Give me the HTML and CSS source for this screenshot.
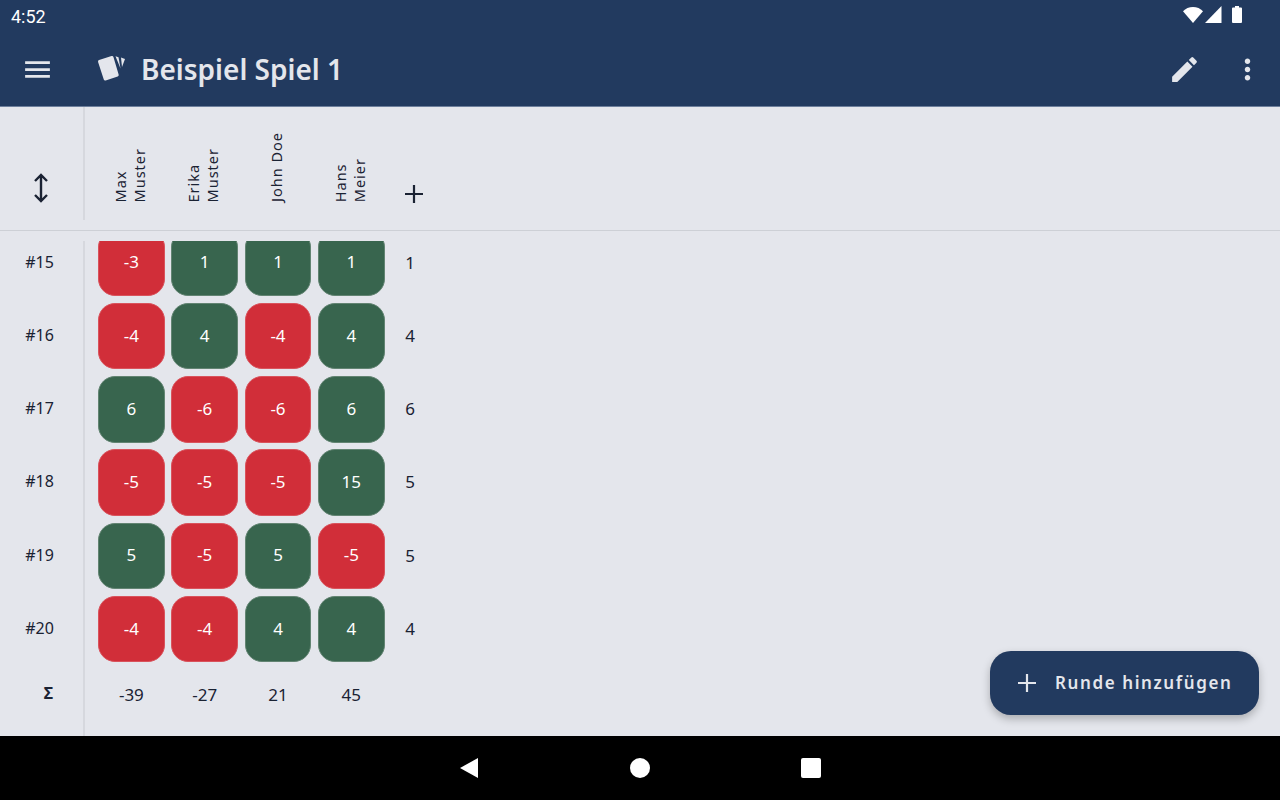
FILE: index.html
```html
<!DOCTYPE html>
<html lang="de">
<head>
    <meta charset="UTF-8">
    <meta name="viewport" content="width=device-width, initial-scale=1.0">
    <title>Beispiel Spiel 1</title>
    <link rel="stylesheet" href="styles.css">
</head>
<body>
    <div class="app">
        <div class="top">
            <div class="status">
                <span class="time">4:52</span>
                <div class="status-icons">
                    <svg class="wifi" width="20" height="16" viewBox="0 0 20 16"><path d="M10 16 0 4.2C2.6 1.6 6.1 0 10 0s7.400 1.600 10 4.200z" fill="#fff"/></svg>
                    <svg class="signal" width="17" height="17" viewBox="0 0 17 17"><path d="M16.500 0v17H0z" fill="#fff"/></svg>
                    <svg class="battery" width="10" height="17" viewBox="0 0 10 17"><path d="M3 0h4v1.500h2a1 1 0 0 1 1 1V16a1 1 0 0 1-1 1H1a1 1 0 0 1-1-1V2.500a1 1 0 0 1 1-1h2z" fill="#fff"/></svg>
                </div>
            </div>
            <div class="appbar">
                <svg class="menu-icon" width="33" height="33" viewBox="0 0 24 24"><path d="M3 18h18v-2H3v2zm0-5h18v-2H3v2zm0-7v2h18V6H3z" fill="#e4e6ec"/></svg>
                <svg class="logo" width="30" height="30" viewBox="0 0 30 30">
                    <path d="M3.500 8.500 16 4.500l5.200 17.500-12 4z" fill="#e4e6ec" stroke="#e4e6ec" stroke-width="3" stroke-linejoin="round"/>
                    <path d="M19.500 3.200 22.500 4.200 24.500 15.500z" fill="#e4e6ec"/>
                    <path d="M25 4.500 29 6 26 14z" fill="#e4e6ec"/>
                </svg>
                <h1 class="title">Beispiel Spiel 1</h1>
                <svg class="edit-icon" width="33" height="33" viewBox="0 0 24 24"><path d="M3 17.250V21h3.750L17.810 9.940l-3.750-3.750L3 17.250zM20.710 7.040a1 1 0 0 0 0-1.410l-2.340-2.340a1 1 0 0 0-1.410 0l-1.830 1.830 3.750 3.750 1.830-1.830z" fill="#e4e6ec"/></svg>
                <svg class="more-icon" width="33" height="33" viewBox="0 0 24 24"><path d="M12 8c1.100 0 2-.9 2-2s-.9-2-2-2-2 .9-2 2 .9 2 2 2zm0 2c-1.100 0-2 .9-2 2s.9 2 2 2 2-.9 2-2-.9-2-2-2zm0 6c-1.100 0-2 .9-2 2s.9 2 2 2 2-.9 2-2-.9-2-2-2z" fill="#e4e6ec"/></svg>
            </div>
        </div>

        <div class="table-head">
            <div class="sort-col">
                <svg width="16" height="30" viewBox="0 0 16 30"><path d="M8 2v26M2 8l6-6 6 6M2 22l6 6 6-6" fill="none" stroke="#1a2233" stroke-width="2.400"/></svg>
            </div>
            <div class="names">
                <div class="name"><span>Max<br>Muster</span></div>
                <div class="name"><span>Erika<br>Muster</span></div>
                <div class="name"><span>John Doe</span></div>
                <div class="name"><span>Hans<br>Meier</span></div>
            </div>
            <svg class="add-player" width="20" height="20" viewBox="0 0 20 20"><path d="M10 1v18M1 10h18" fill="none" stroke="#1a2233" stroke-width="2.200"/></svg>
        </div>

        <div class="table-body">
            <div class="rows">
                <div class="row">
                    <div class="round">#15</div>
                    <div class="cell red">-3</div><div class="cell green">1</div><div class="cell green">1</div><div class="cell green">1</div>
                    <div class="points">1</div>
                </div>
                <div class="row">
                    <div class="round">#16</div>
                    <div class="cell red">-4</div><div class="cell green">4</div><div class="cell red">-4</div><div class="cell green">4</div>
                    <div class="points">4</div>
                </div>
                <div class="row">
                    <div class="round">#17</div>
                    <div class="cell green">6</div><div class="cell red">-6</div><div class="cell red">-6</div><div class="cell green">6</div>
                    <div class="points">6</div>
                </div>
                <div class="row">
                    <div class="round">#18</div>
                    <div class="cell red">-5</div><div class="cell red">-5</div><div class="cell red">-5</div><div class="cell green">15</div>
                    <div class="points">5</div>
                </div>
                <div class="row">
                    <div class="round">#19</div>
                    <div class="cell green">5</div><div class="cell red">-5</div><div class="cell green">5</div><div class="cell red">-5</div>
                    <div class="points">5</div>
                </div>
                <div class="row">
                    <div class="round">#20</div>
                    <div class="cell red">-4</div><div class="cell red">-4</div><div class="cell green">4</div><div class="cell green">4</div>
                    <div class="points">4</div>
                </div>
                <div class="row sum-row">
                    <div class="round sigma">Σ</div>
                    <div class="sum">-39</div><div class="sum">-27</div><div class="sum">21</div><div class="sum">45</div>
                </div>
            </div>
        </div>

        <div class="navbar">
            <svg width="18" height="20" viewBox="0 0 18 20"><path d="M0 10 18 0v20z" fill="#fff"/></svg>
            <div class="nav-home"></div>
            <div class="nav-recent"></div>
        </div>

        <button class="fab">
            <svg width="20" height="20" viewBox="0 0 20 20"><path d="M10 1v18M1 10h18" fill="none" stroke="#e4e6ec" stroke-width="2.200"/></svg>
            <span class="fab-label">Runde hinzufügen</span>
        </button>
    </div>
</body>
</html>
```

FILE: styles.css
```css
* {
    box-sizing: border-box;
}
body {
    margin: 0;
    font-family: 'Noto Sans', sans-serif;
    background-color: #e4e6ec;
    color: #1a2233;
}
.app {
    position: relative;
    width: 1280px;
    height: 800px;
    display: flex;
    flex-direction: column;
    overflow: hidden;
}
.top {
    height: 107px;
    background-color: #223a5f;
    border-bottom: 1px solid #6d7f9c;
}
.status {
    height: 33px;
    display: flex;
    justify-content: space-between;
    padding: 0 38px 0 11px;
    color: #fff;
}
.time {
    font-family: Roboto, sans-serif;
    font-size: 18px;
    line-height: 33px;
}
.status-icons {
    display: flex;
    align-items: flex-start;
    padding-top: 6px;
}
.wifi {
    margin-top: 1px;
}
.signal {
    margin-left: 2px;
}
.battery {
    margin-left: 10px;
}
.appbar {
    height: 73px;
    display: flex;
    align-items: center;
    padding: 0 16px 0 21px;
}
.logo {
    margin-left: 42px;
    margin-top: -3px;
}
.title {
    flex: 1;
    margin: -2px 0 0 15px;
    font-size: 28px;
    font-weight: 600;
    color: #e4e6ec;
}
.edit-icon {
    margin-right: 1px;
    transform: translateX(1px);
}
.more-icon {
    margin-left: 30px;
}
.table-head {
    height: 124px;
    display: flex;
    border-bottom: 1px solid #cdd0d6;
}
.sort-col {
    width: 85px;
    height: 113px;
    flex-shrink: 0;
    border-right: 2px solid #d6d8de;
    padding: 66px 0 0 33px;
}
.names {
    display: flex;
    padding-left: 8.500px;
}
.name {
    width: 73.300px;
    height: 95px;
    display: flex;
    justify-content: center;
    align-items: flex-end;
}
.name span {
    writing-mode: vertical-rl;
    transform: rotate(180deg);
    font-size: 14.500px;
    line-height: 19px;
    letter-spacing: 1px;
}
.add-player {
    margin: 77px 0 0 17px;
}
.table-body {
    flex: 1;
    padding-top: 10px;
    overflow: hidden;
}
.rows {
    height: 100%;
    overflow: hidden;
}
.row {
    display: flex;
    height: 73.250px;
}
.row:first-child {
    margin-top: -11.300px;
}
.round {
    width: 85px;
    flex-shrink: 0;
    height: 73.250px;
    border-right: 2px solid #d6d8de;
    padding: 21px 4px 0 0;
    text-align: center;
    font-size: 16px;
    margin-right: 13px;
}
.cell {
    width: 66.800px;
    height: 66.500px;
    margin-right: 6.500px;
    padding-bottom: 2px;
    border-radius: 17px;
    display: flex;
    align-items: center;
    justify-content: center;
    font-size: 17px;
    color: #fff;
}
.red {
    background-color: #d12e39;
    border: 1px solid #d9535c;
}
.green {
    background-color: #38654e;
    border: 1px solid #628472;
}
.points {
    margin-left: 14px;
    padding-top: 21px;
    font-size: 17px;
}
.sum-row {
    height: 74px;
}
.sigma {
    height: 74px;
    padding: 13px 0 0 14px;
    font-weight: 700;
}
.sum {
    width: 73.300px;
    padding: 14px 6.500px 0 0;
    text-align: center;
    font-size: 17px;
}
.navbar {
    height: 64px;
    background-color: #000;
    display: flex;
    align-items: center;
    padding-left: 460px;
}
.nav-home {
    width: 20px;
    height: 20px;
    margin-left: 151.500px;
    border-radius: 50%;
    background-color: #fff;
}
.nav-recent {
    width: 20px;
    height: 20px;
    margin-left: 151px;
    border-radius: 2px;
    background-color: #fff;
}
.fab {
    position: absolute;
    left: 990px;
    top: 651px;
    width: 269px;
    height: 64px;
    display: flex;
    align-items: center;
    gap: 18px;
    padding: 0 0 0 27px;
    border: none;
    border-radius: 21px;
    background-color: #223a5f;
    color: #e4e6ec;
    font-family: 'Noto Sans', sans-serif;
    font-size: 17px;
    font-weight: 600;
    letter-spacing: 1.600px;
    box-shadow: 0 4px 8px rgba(0, 0, 0, 0.25);
}
.fab-label {
    padding-bottom: 1px;
}
```
